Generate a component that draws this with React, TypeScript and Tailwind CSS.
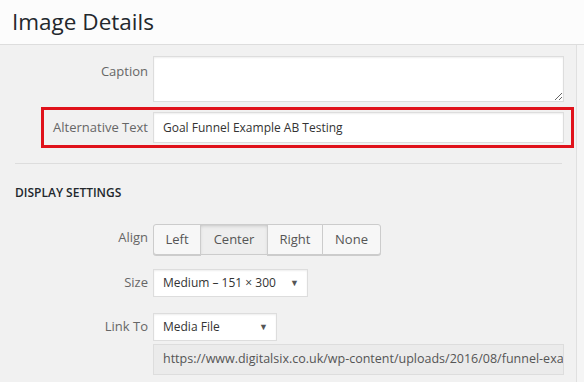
const labelCls =
  "w-[148px] shrink-0 text-right text-[13px] leading-[18px] text-[#666]";

const Row = ({
  label,
  children,
  className = "",
  labelTop = "pt-[6px]",
}: {
  label: string;
  children: React.ReactNode;
  className?: string;
  labelTop?: string;
}) => (
  <div className={`flex items-start ${className}`}>
    <label className={`${labelCls} ${labelTop}`}>{label}</label>
    <div className="ml-[5px] flex flex-col">{children}</div>
  </div>
);

const SelectBox = ({ value, width }: { value: string; width: string }) => (
  <div
    className={`flex h-[28px] items-center justify-between border border-[#ddd] bg-white pl-[9px] pr-[8px] text-[12px] text-[#333] shadow-[inset_0_1px_2px_rgba(0,0,0,0.07)] ${width}`}
  >
    <span>{value}</span>
    <span className="text-[9px] text-[#555]">▼</span>
  </div>
);

const alignOptions = ["Left", "Center", "Right", "None"];
const alignWidths = ["w-[48px]", "w-[68px]", "w-[56px]", "w-[59px]"];

export default function App() {
  return (
    <div
      className="h-[382px] w-[584px] overflow-hidden bg-[#f1f1f1]"
      style={{ fontFamily: '"Open Sans", "Liberation Sans", sans-serif' }}
    >
      <header className="flex h-[45px] items-center border-b border-[#dddddd] bg-[#fcfcfc] px-[12px]">
        <h1 className="text-[22.5px] font-normal leading-none text-[#23282d]">
          Image Details
        </h1>
      </header>

      <div className="flex h-[337px]">
        <div className="w-[577px] shrink-0 border-r border-[#e0e0e0] pt-[11px]">
          <Row label="Caption" labelTop="pt-[6px]">
            <textarea
              className="h-[46px] w-[411px] resize-y border border-[#ddd] bg-white shadow-[inset_0_1px_2px_rgba(0,0,0,0.07)] outline-none"
              defaultValue=""
            />
          </Row>

          {/* highlighted row */}
          <div className="relative mt-[10px]">
            <span className="pointer-events-none absolute top-[-5px] bottom-[-5px] left-[41px] right-[2px] border-[3px] border-[#e0121b]" />
            <Row label="Alternative Text">
              <div className="flex h-[31px] w-[411px] items-center border border-[#ddd] bg-white px-[9px] text-[12px] text-[#333] shadow-[inset_0_1px_2px_rgba(0,0,0,0.07)]">
                Goal Funnel Example AB Testing
              </div>
            </Row>
          </div>

          <div className="mx-[15px] mt-[20px] w-[547px] border-t border-[#dddddd]" />

          <h2 className="mt-[20px] ml-[15px] text-[12px] font-semibold uppercase leading-[18px] text-[#23282d]">
            Display Settings
          </h2>

          <Row label="Align" className="mt-[22px]" labelTop="pt-[4px]">
            <div className="flex h-[31px]">
              {alignOptions.map((opt, i) => (
                <div
                  key={opt}
                  className={`flex items-center justify-center border border-[#cccccc] text-[13px] text-[#555] ${alignWidths[i]} ${
                    i > 0 ? "-ml-px" : ""
                  } ${
                    opt === "Center"
                      ? "bg-[#eeeeee] border-[#bbbbbb] shadow-[inset_0_2px_5px_-3px_rgba(0,0,0,0.4)]"
                      : "bg-[#f7f7f7] shadow-[0_1px_0_#cccccc]"
                  } ${i === 0 ? "rounded-l-[3px]" : ""} ${
                    i === 3 ? "rounded-r-[3px]" : ""
                  }`}
                >
                  {opt}
                </div>
              ))}
            </div>
          </Row>

          <Row label="Size" className="mt-[14px]" labelTop="pt-[4px]">
            <SelectBox value="Medium – 151 × 300" width="w-[155px]" />
          </Row>

          <Row label="Link To" className="mt-[16px]" labelTop="pt-[4px]">
            <SelectBox value="Media File" width="w-[124px]" />
            <div className="mt-[3px] flex h-[31px] w-[411px] items-center overflow-hidden whitespace-nowrap border border-[#ddd] bg-[#ebebeb] px-[9px] text-[12.5px] text-[#555]">
              https://www.digitalsix.co.uk/wp-content/uploads/2016/08/funnel-example-ab-testing.jpg
            </div>
          </Row>
        </div>
        <div className="flex-1 bg-[#f5f5f5]" />
      </div>
    </div>
  );
}
